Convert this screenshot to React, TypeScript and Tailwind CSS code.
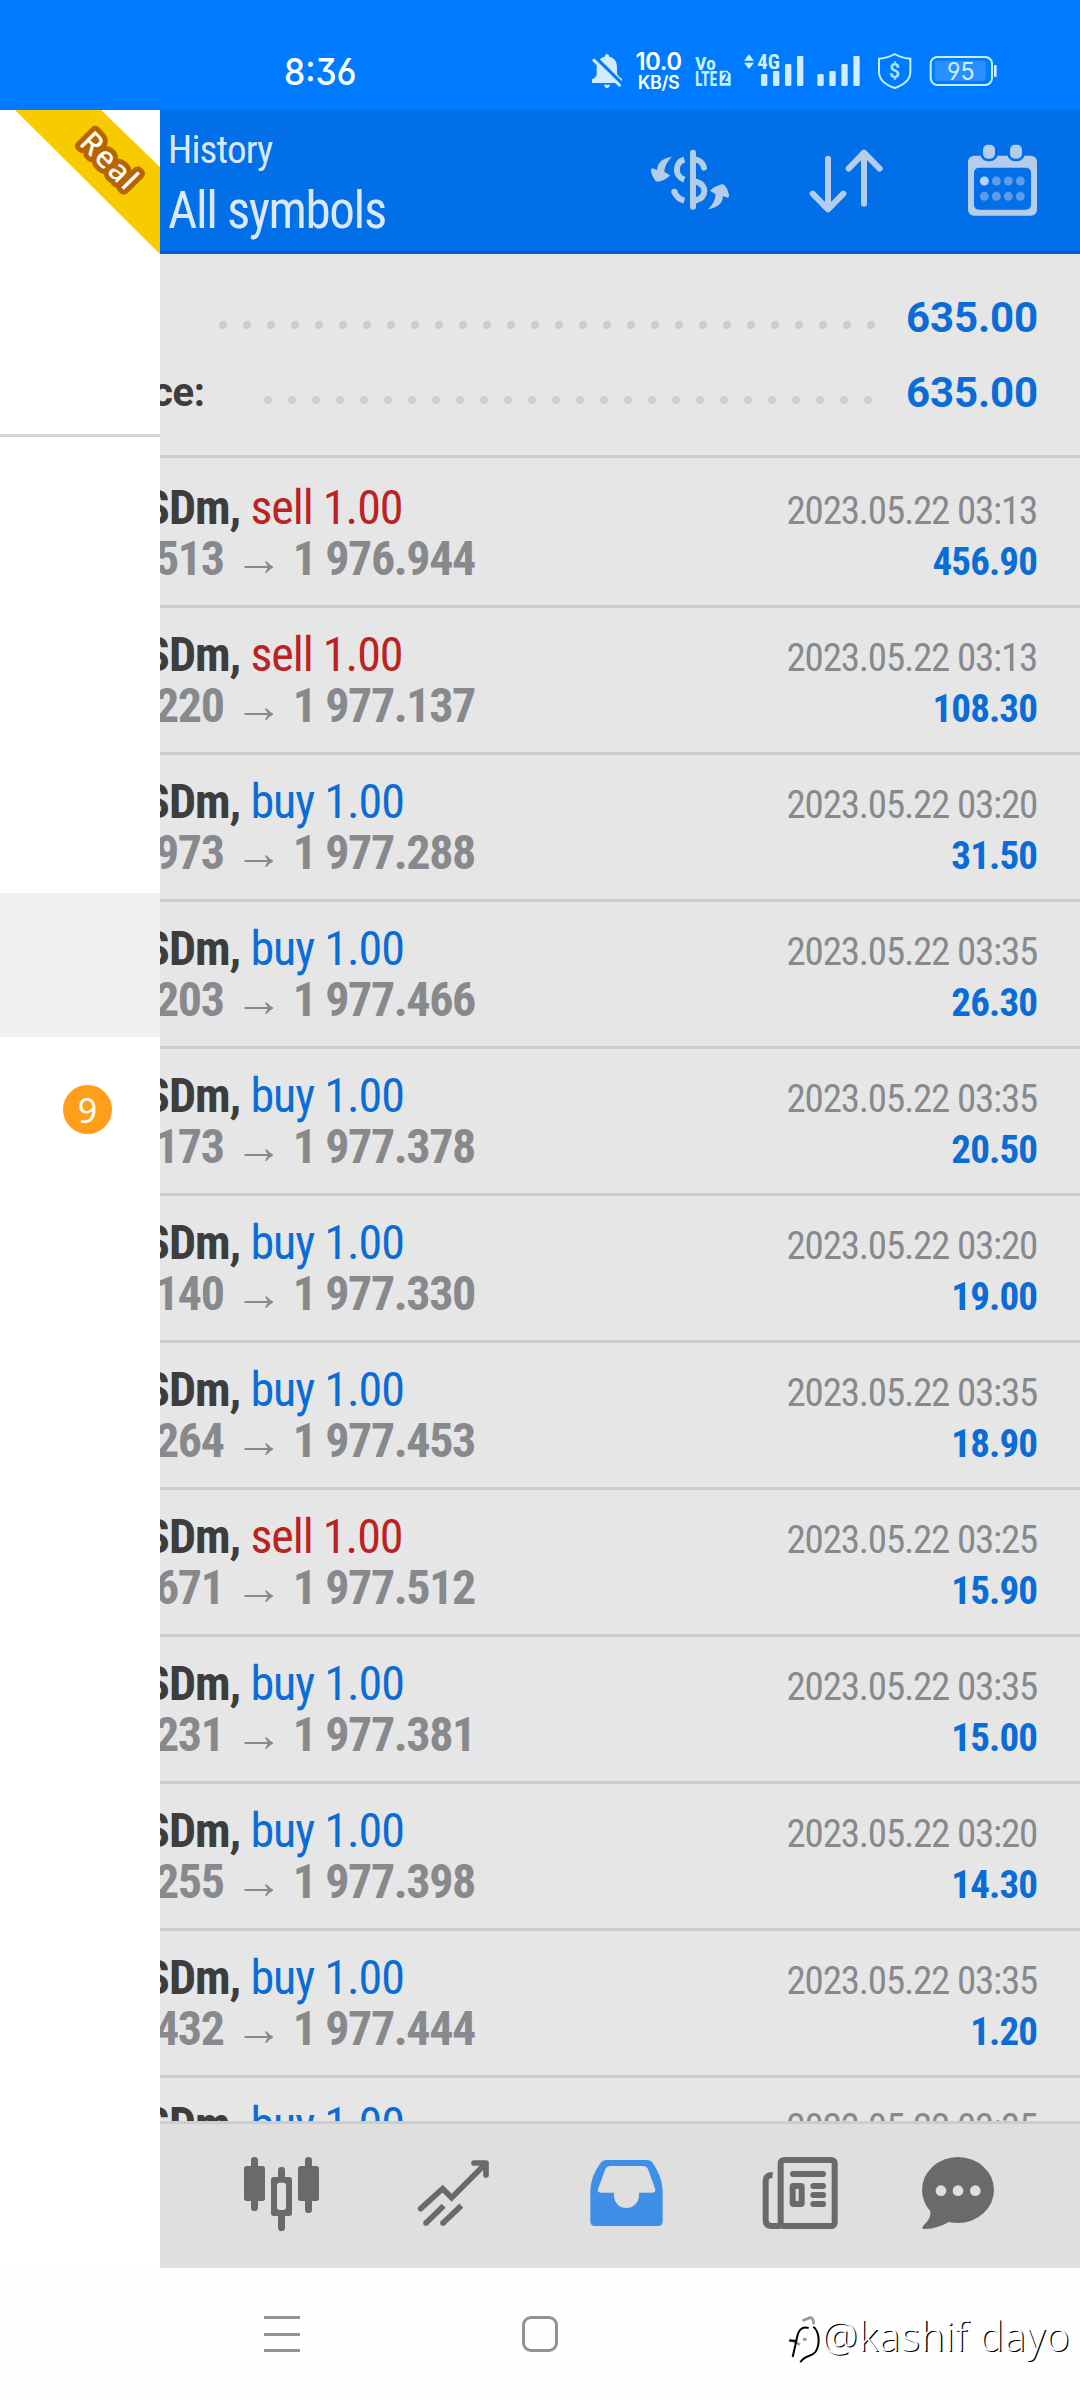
interface Deal {
  side: 'buy' | 'sell';
  from: string;
  to: string;
  time: string;
  profit: string;
}

const deals: Deal[] = [
  { side: 'sell', from: '513', to: '1 976.944', time: '2023.05.22 03:13', profit: '456.90' },
  { side: 'sell', from: '220', to: '1 977.137', time: '2023.05.22 03:13', profit: '108.30' },
  { side: 'buy', from: '973', to: '1 977.288', time: '2023.05.22 03:20', profit: '31.50' },
  { side: 'buy', from: '203', to: '1 977.466', time: '2023.05.22 03:35', profit: '26.30' },
  { side: 'buy', from: '173', to: '1 977.378', time: '2023.05.22 03:35', profit: '20.50' },
  { side: 'buy', from: '140', to: '1 977.330', time: '2023.05.22 03:20', profit: '19.00' },
  { side: 'buy', from: '264', to: '1 977.453', time: '2023.05.22 03:35', profit: '18.90' },
  { side: 'sell', from: '671', to: '1 977.512', time: '2023.05.22 03:25', profit: '15.90' },
  { side: 'buy', from: '231', to: '1 977.381', time: '2023.05.22 03:35', profit: '15.00' },
  { side: 'buy', from: '255', to: '1 977.398', time: '2023.05.22 03:20', profit: '14.30' },
  { side: 'buy', from: '432', to: '1 977.444', time: '2023.05.22 03:35', profit: '1.20' },
];

function SignalBars({ x }: { x: number }) {
  return (
    <g fill="#d3ebff">
      <rect x={x} y="102" width="19" height="36" rx="4" />
      <rect x={x + 36} y="93" width="19" height="45" rx="4" />
      <rect x={x + 72} y="72" width="19" height="66" rx="4" />
      <rect x={x + 108} y="48" width="19" height="90" rx="4" />
    </g>
  );
}

function StatusBar() {
  return (
    <header className="flex h-[110px] items-start bg-[#007bff] pt-[52px] text-white">
      <div className="ml-[284px] w-[307px] font-['Inter',sans-serif] text-[37px] leading-[40px] font-medium">
        <span className="inline-block origin-left scale-x-[0.91] [font-feature-settings:'cv09','cv03','cv04']">
          8:36
        </span>
      </div>

      <svg className="h-[38px] w-[32px]" viewBox="33 36 96 114">
        <path
          d="M81 42q6 0 7 8C105 54 111 66 111 82V98Q112 108 126 116V129H36V118Q50 112 50 102V80C50 65 60 53 74 50q1-8 7-8z"
          fill="#d3ebff"
        />
        <path d="M72 134h18q-3 10-9 10t-9-10z" fill="#d3ebff" />
        <path d="M45 51L130 135" stroke="#007bff" strokeWidth="10" />
        <path d="M39 58L121 138" stroke="#d3ebff" strokeWidth="9" />
      </svg>

      <div className="ml-[11px] w-[49px] text-center font-['Inter',sans-serif] font-semibold whitespace-nowrap">
        <p className="text-[24px] leading-[19px] tracking-[-0.5px]">10.0</p>
        <p className="mt-[3px] text-[18px] leading-[18px] tracking-[-0.4px]">KB/S</p>
      </div>

      <svg className="ml-[11px] h-[38px] w-[38px]" viewBox="340 36 114 114">
        <g fill="#c5f0ff" fontFamily="Roboto Condensed" fontWeight="700">
          <text x="343" y="89" fontSize="56" textLength="63" lengthAdjust="spacingAndGlyphs">Vo</text>
          <text x="343" y="137" fontSize="60" textLength="67" lengthAdjust="spacingAndGlyphs">LTE</text>
        </g>
        <path d="M417 92H440L450 101V137H417z" fill="#c5f0ff" />
        <text x="422" y="130" fontSize="44" fontFamily="Roboto Condensed" fontWeight="700" fill="#007bff">
          2
        </text>
      </svg>

      <svg className="ml-[11px] h-[38px] w-[62px]" viewBox="487 36 186 114">
        <path d="M490 62L505 43L520 62zM490 68H520L505 87z" fill="#c5f0ff" />
        <SignalBars x={541} />
        <text
          x="530"
          y="87"
          fontSize="60"
          fontFamily="Roboto Condensed"
          fontWeight="700"
          fill="#d3f2ff"
          stroke="#007bff"
          strokeWidth="8"
          paintOrder="stroke"
          textLength="68"
          lengthAdjust="spacingAndGlyphs"
        >
          4G
        </text>
      </svg>

      <svg className="ml-[11px] h-[38px] w-[45px]" viewBox="708 36 135 114">
        <SignalBars x={712} />
      </svg>

      <svg className="ml-[16px] h-[38px] w-[36px]" viewBox="892 36 108 114">
        <path
          d="M945 42Q964 54 992 56V96C992 120 968 136 945 144C922 136 898 120 898 96V56Q926 54 945 42z"
          fill="none"
          stroke="#c5f0ff"
          strokeWidth="6"
        />
        <text x="945" y="113" fontSize="58" fontFamily="Roboto" fontWeight="700" textAnchor="middle" fill="#b4deff">
          $
        </text>
      </svg>

      <svg className="ml-[16px] h-[38px] w-[69px]" viewBox="1048 36 207 114">
        <rect x="1053" y="51" width="184" height="84" rx="20" fill="none" stroke="#c5f0ff" strokeWidth="6" />
        <rect x="1065" y="62" width="153" height="61" rx="8" fill="#2b90ff" />
        <rect x="1243" y="75" width="8" height="36" rx="3" fill="#c5f0ff" />
        <text
          x="1102"
          y="120"
          fontSize="72"
          fontFamily="Inter"
          textLength="83"
          lengthAdjust="spacingAndGlyphs"
          fill="#c5f0ff"
          className="[font-feature-settings:'cv03','cv04']"
        >
          95
        </text>
      </svg>
    </header>
  );
}

function Drawer() {
  return (
    <aside className="h-full w-[160px] shrink-0 bg-white">
      <div className="h-[327px] border-b-[3px] border-[#d6d6d6]">
        <svg className="h-[144px] w-[160px]" viewBox="0 0 160 144">
          <path d="M15 0H101L160 57V144z" fill="#f7cb00" />
          <text
            transform="translate(78 34) rotate(45)"
            fontFamily="Noto Sans"
            fontSize="30"
            fontWeight="500"
            textLength="67"
            fill="#fff"
            stroke="#b86400"
            strokeWidth="10"
            strokeLinejoin="round"
            paintOrder="stroke"
          >
            Real
          </text>
        </svg>
      </div>
      <div className="mt-[456px] h-[144px] bg-[#f0f0f0]" />
      <div className="flex h-[145px] items-center pl-[63px]">
        <span className="flex size-[49px] items-center justify-center rounded-full bg-[#ff9e1b] font-['Noto_Sans',sans-serif] text-[34px] leading-none text-white">
          9
        </span>
      </div>
    </aside>
  );
}

function ArrowHook() {
  return (
    <path d="M156 111Q112 118 111 151L97 146Q92 147 93 155Q96 172 106 183Q112 188 120 185Q140 179 150 167L133 156Q134 132 156 111z" />
  );
}

function TitleBar() {
  return (
    <div className="flex h-[144px] border-b-[3px] border-[#0062c8] bg-[#006fe8] font-['Roboto_Condensed',sans-serif] text-[#dbe8fa]">
      <div className="w-[490px] pt-[18px] pl-[8px]">
        <p className="text-[39px] leading-[45px] tracking-[-0.8px]">History</p>
        <h1 className="mt-[8px] text-[51px] leading-[60px] tracking-[-1.4px]">All symbols</h1>
      </div>

      <svg className="mt-[33px] h-[75px] w-[80px]" viewBox="90 70 240 225" fill="#b5cdea">
        <g fill="none" stroke="#b5cdea" strokeWidth="18">
          <path d="M219 99V261" strokeLinecap="round" />
          <path d="M226 119Q248 124 252 144" strokeLinecap="round" />
          <path d="M193 119C163 129 163 170 193 180" />
          <path d="M163 216Q170 237 193 243" />
          <path d="M226 185C262 196 262 232 226 243" />
        </g>
        <circle cx="163" cy="216" r="9" />
        <ArrowHook />
        <g transform="rotate(180 210 190)">
          <ArrowHook />
        </g>
      </svg>

      <svg
        className="mt-[33px] ml-[78px] h-[75px] w-[76px]"
        viewBox="564 70 228 225"
        fill="none"
        stroke="#b5cdea"
        strokeWidth="18"
        strokeLinecap="round"
        strokeLinejoin="round"
      >
        <path d="M624 117V268M578 222L624 269L670 222" />
        <path d="M732 252V100M686 147L732 99L779 147" />
      </svg>

      <svg className="mt-[33px] ml-[83px] h-[75px] w-[71px]" viewBox="1041 70 213 225">
        <rect x="1044" y="108" width="207" height="180" rx="18" fill="#b5cdea" />
        <rect x="1062" y="144" width="171" height="126" rx="15" fill="#006fe8" />
        <g fill="#b5cdea" stroke="#006fe8" strokeWidth="16" paintOrder="stroke">
          <rect x="1089" y="75" width="36" height="42" rx="15" />
          <rect x="1170" y="75" width="36" height="42" rx="15" />
        </g>
        {[184, 230].map((cy) =>
          [1093, 1129, 1165, 1201].map((cx, i) => (
            <circle key={`${cx}-${cy}`} cx={cx} cy={cy} r="13.5" fill={cy === 184 && i === 0 ? '#b8d4f4' : '#5a9eea'} />
          )),
        )}
      </svg>
    </div>
  );
}

function Dots({ count }: { count: number }) {
  return (
    <div className="mt-[41px] flex gap-4">
      {Array.from({ length: count }, (_, i) => (
        <span key={i} className="size-2 rounded-full bg-[#cdcdcd]" />
      ))}
    </div>
  );
}

function Summary() {
  return (
    <section className="h-[204px] border-b-[3px] border-[#cdcdcd] pt-[26px] font-['Roboto',sans-serif] text-[42px] leading-[75px] font-bold">
      <div className="flex h-[75px] pr-[42px]">
        <span className="w-[59px]" />
        <Dots count={28} />
        <span className="ml-auto tracking-[-0.1px] text-[#0a6cd6]">635.00</span>
      </div>
      <div className="flex h-[75px] pr-[42px]">
        <span className="-ml-[8px] w-[112px] text-[40px] tracking-[-0.4px] text-[#3d3d3d]">ce:</span>
        <Dots count={26} />
        <span className="ml-auto tracking-[-0.1px] text-[#0a6cd6]">635.00</span>
      </div>
    </section>
  );
}

function DealRow({ deal }: { deal: Deal }) {
  return (
    <li className="flex h-[147px] shrink-0 justify-between border-b-[3px] border-[#cdcdcd] pr-[43px] leading-[51px] whitespace-nowrap">
      <div className="pt-[21px] text-[48px]">
        <p className="-ml-[16px] tracking-[-1px]">
          <b className="text-[#3d3d3d]">SDm,</b>{' '}
          <span className={deal.side === 'sell' ? 'text-[#bb2222]' : 'text-[#0a6cd6]'}>{deal.side} 1.00</span>
        </p>
        {deal.to && (
          <p className="-ml-[5px] font-bold text-[#87898d]">
            <span className="tracking-[-1.4px]">{deal.from}</span> <span>→</span>{' '}
            <span className="-ml-px tracking-[-1.4px]">{deal.to}</span>
          </p>
        )}
      </div>
      <div className="pt-[25px] text-right text-[39px]">
        <p className="tracking-[-1.2px] text-[#87898d]">{deal.time}</p>
        <p className="font-bold tracking-[-0.9px] text-[#0a6cd6]">{deal.profit}</p>
      </div>
    </li>
  );
}

function TabBar() {
  return (
    <nav className="flex h-[147px] border-t-[3px] border-[#cdcdcd] bg-[#dfdfdf] pt-[31px] pl-[83px]">
      <svg className="h-[77px] w-[77px]" viewBox="69 45 231 231" fill="#6a6a6a">
        <rect x="93" y="51" width="21" height="162" rx="10" />
        <rect x="72" y="78" width="63" height="105" rx="8" />
        <rect x="255" y="51" width="21" height="168" rx="10" />
        <rect x="234" y="78" width="63" height="105" rx="8" />
        <rect x="174" y="81" width="21" height="192" rx="10" />
        <rect x="153" y="111" width="63" height="117" rx="8" />
        <rect x="171" y="128" width="27" height="82" rx="8" fill="#dfdfdf" />
      </svg>

      <svg
        className="ml-[97px] h-[77px] w-[73px]"
        viewBox="591 45 219 231"
        fill="none"
        stroke="#6a6a6a"
        strokeWidth="17"
      >
        <path d="M602 206L668 146L695 173L792 76" strokeLinecap="round" />
        <path d="M762 69H798V105" strokeLinecap="round" strokeLinejoin="round" />
        <path d="M618 249L671 197M669 249L724 197" />
        <g fill="#6a6a6a" stroke="none">
          <circle cx="618" cy="249" r="8.5" />
          <circle cx="669" cy="249" r="8.5" />
        </g>
      </svg>

      <svg className="ml-[99px] h-[77px] w-[75px]" viewBox="27 45 225 231">
        <path
          fillRule="evenodd"
          fill="#3d8fe8"
          d="M78 60H202Q212 60 218 68Q246 110 248 150V244Q248 258 234 258H45Q31 258 31 244V150Q32 110 62 68Q68 60 78 60zM92 78Q80 78 76 88L54 148Q52 158 62 158H102V168C103 190 120 204 139 204S176 190 177 168V158H218Q227 158 226 148L204 88Q200 78 188 78z"
        />
      </svg>

      <svg
        className="ml-[97px] h-[77px] w-[78px]"
        viewBox="543 45 234 231"
        fill="none"
        stroke="#6a6a6a"
        strokeWidth="18"
      >
        <rect x="602" y="60" width="162" height="198" rx="10" />
        <path d="M578 105Q557 104 557 124V240Q557 258 575 258H602" />
        <path d="M639 102H729M700 138H729M700 165H729M700 192H729" strokeLinecap="round" />
        <rect x="638" y="138" width="27" height="54" rx="2" />
      </svg>

      <svg className="ml-[82px] h-[77px] w-[74px]" viewBox="1023 45 222 231" fill="#6a6a6a">
        <ellipse cx="1134" cy="150" rx="108" ry="99" />
        <path d="M1046 204Q1062 228 1030 257Q1022 267 1034 267Q1072 266 1108 245z" />
        <g fill="#dfdfdf">
          <circle cx="1083" cy="152" r="16" />
          <circle cx="1134" cy="152" r="16" />
          <circle cx="1186" cy="152" r="16" />
        </g>
      </svg>
    </nav>
  );
}

function SystemNav() {
  return (
    <footer className="flex h-[132px] items-start bg-[#fefefe] pt-[48px]">
      <div className="ml-[264px] flex h-[36px] w-[36px] flex-col justify-between">
        <span className="h-[3px] bg-[#939393]" />
        <span className="h-[3px] bg-[#939393]" />
        <span className="h-[3px] bg-[#939393]" />
      </div>
      <div className="ml-[222px] size-[36px] rounded-[9px] border-[3px] border-[#939393]" />
      <svg className="-mt-[3px] ml-[221px] h-[55px] w-[45px]" viewBox="27 39 135 165" fill="none">
        <path d="M97 62L120 53Q131 52 131 73M58 118L90 134M99 118H110" stroke="#999" strokeWidth="8" />
        <path d="M116 84C94 78 84 92 80 118L68 171M58 122H78" stroke="#000" strokeWidth="6" />
        <path d="M130 80C150 96 150 136 136 156C124 172 104 164 91 187" stroke="#000" strokeWidth="6" />
      </svg>
      <span className="-ml-[2px] font-['Open_Sans',sans-serif] text-[40px] leading-[40px] font-light tracking-[1px] whitespace-nowrap text-white [text-shadow:1.3px_1px_0_#000]">
        @kashif dayo
      </span>
    </footer>
  );
}

export default function App() {
  return (
    <div className="flex h-[2400px] w-[1080px] flex-col overflow-hidden bg-white">
      <StatusBar />
      <div className="flex h-[2158px] shrink-0">
        <Drawer />
        <main className="flex w-[920px] flex-col overflow-hidden bg-[#e6e6e6]">
          <TitleBar />
          <Summary />
          <ul className="flex h-[1663px] flex-col overflow-hidden pt-[3px] font-['Roboto_Condensed','Liberation_Sans',sans-serif]">
            {deals.map((deal) => (
              <DealRow key={deal.profit} deal={deal} />
            ))}
            {/* next row peeks out above the tab bar */}
            <DealRow deal={{ side: 'buy', from: '', to: '', time: '2023.05.22 03:35', profit: '' }} />
          </ul>
          <TabBar />
        </main>
      </div>
      <SystemNav />
    </div>
  );
}
